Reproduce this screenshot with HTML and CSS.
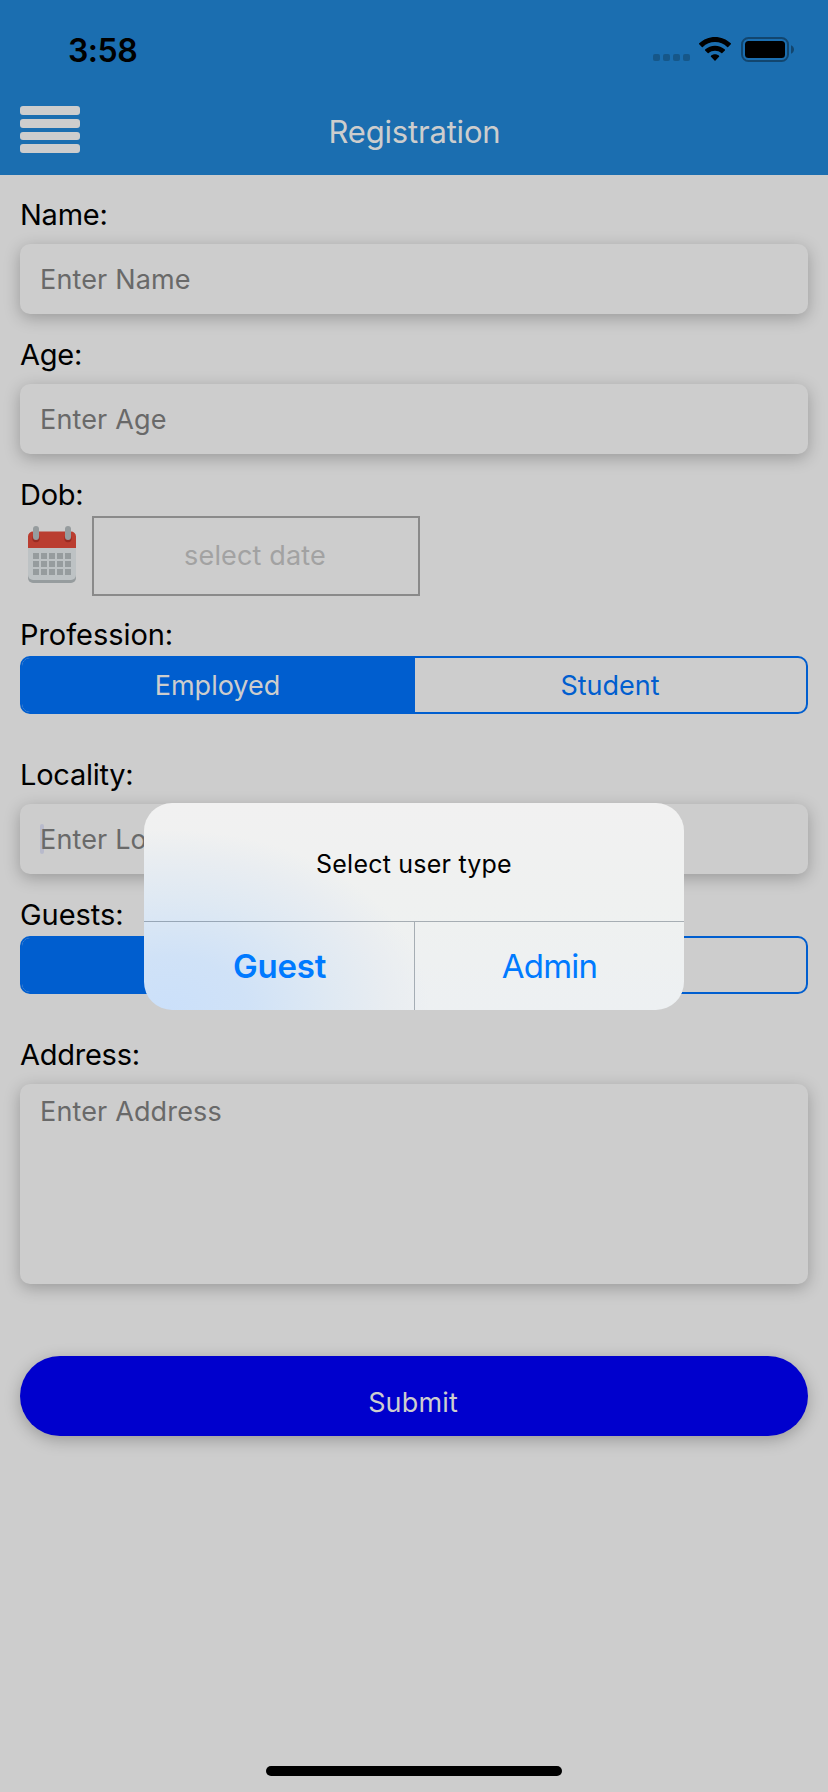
FILE: index.html
```html
<!DOCTYPE html>
<html lang="en">
<head>
<meta charset="utf-8">
<title>Registration</title>
<link rel="stylesheet" href="styles.css">
</head>
<body>
<div class="screen">
  <header class="header">
    <div class="status-bar">
      <span class="time">3:58</span>
      <div class="status-icons">
        <svg class="cellular" width="37" height="7" viewBox="0 0 37 7"><g fill="#165789"><rect width="7" height="7" rx="2"/><rect x="10" width="7" height="7" rx="2"/><rect x="20" width="7" height="7" rx="2"/><rect x="30" width="7" height="7" rx="2"/></g></svg>
        <svg class="wifi" width="32" height="24" viewBox="0 0 32 24"><path d="M16 0C10 0 4.400 2.300.2 6.300q-.5.500 0 1l2.600 2.600q.5.500 1 0C7.100 6.800 11.400 5.100 16 5.100s8.900 1.700 12.200 4.800q.5.500 1 0l2.600-2.600q.5-.5 0-1C27.600 2.300 22 0 16 0zM16 8.700c-3.700 0-7.200 1.400-9.900 3.800q-.5.500 0 1l2.600 2.600q.5.500 1 0c1.700-1.500 3.900-2.300 6.300-2.300s4.600.8 6.300 2.300q.5.500 1 0l2.600-2.600q.5-.5 0-1C23.200 10.100 19.700 8.700 16 8.700zM16 17.300c-1.500 0-2.900.5-4 1.500q-.5.500 0 1l3.500 3.600q.5.500 1 0l3.500-3.600q.5-.5 0-1c-1.100-1-2.500-1.500-4-1.500z"/></svg>
        <svg class="battery" width="53" height="25" viewBox="0 0 53 25"><rect x="1" y="1" width="46" height="23" rx="6.500" fill="none" stroke="#12466f" stroke-width="2"/><rect x="4" y="4" width="40" height="17" rx="3.500"/><path d="M50 8.200c4 1.700 4 6.900 0 8.600z" fill="#12466f"/></svg>
      </div>
    </div>
    <div class="nav-bar">
      <button class="menu" aria-label="Menu"><span></span><span></span><span></span><span></span></button>
      <h1 class="title">Registration</h1>
    </div>
  </header>

  <main class="form">
    <div class="field"><label class="label">Name:</label><div class="input"><span>Enter Name</span></div></div>
    <div class="field"><label class="label">Age:</label><div class="input"><span>Enter Age</span></div></div>
    <div class="field">
      <label class="label">Dob:</label>
      <div class="date-row">
        <svg class="calendar" width="48" height="57" viewBox="0 0 48 57">
          <path d="M0 18h48v34a5 5 0 0 1-5 5H5a5 5 0 0 1-5-5z" fill="#969c9e"/>
          <path d="M0 18h48v31a5 5 0 0 1-5 5H5a5 5 0 0 1-5-5z" fill="#bdc2c4"/>
          <path d="M5 5.500h38a5 5 0 0 1 5 5V22H0V10.500a5 5 0 0 1 5-5z" fill="#ba3d30"/>
          <circle cx="8" cy="12.500" r="3.700" fill="#982b22"/><circle cx="40" cy="12.500" r="3.700" fill="#982b22"/>
          <rect x="5" width="6" height="14" rx="3" fill="#969c9e"/><rect x="37" width="6" height="14" rx="3" fill="#969c9e"/>
          <path d="M5 27h6v6H5zm8 0h6v6h-6zm8 0h6v6h-6zm8 0h6v6h-6zm8 0h6v6h-6zM5 35h6v6H5zm8 0h6v6h-6zm8 0h6v6h-6zm8 0h6v6h-6zm8 0h6v6h-6zM5 43h6v6H5zm8 0h6v6h-6zm8 0h6v6h-6zm8 0h6v6h-6zm8 0h6v6h-6z" fill="#969c9e"/>
        </svg>
        <div class="date">select date</div>
      </div>
    </div>
    <div class="field">
      <label class="label wide">Profession:</label>
      <div class="segmented"><span class="segment selected">Employed</span><span class="segment">Student</span></div>
    </div>
    <div class="field"><label class="label">Locality:</label><div class="input focused"><span>Enter Locality</span></div></div>
    <div class="field">
      <label class="label wide">Guests:</label>
      <div class="segmented"><span class="segment selected"></span><span class="segment"></span></div>
    </div>
    <div class="field"><label class="label">Address:</label><div class="input textarea"><span>Enter Address</span></div></div>
    <button class="submit">Submit</button>
  </main>

  <div class="home-indicator"></div>

  <div class="dialog" role="dialog">
    <p class="dialog-title">Select user type</p>
    <div class="dialog-actions">
      <button class="action bold">Guest</button>
      <button class="action">Admin</button>
    </div>
  </div>
</div>
</body>
</html>
```
FILE: styles.css
```css
* { box-sizing: border-box; }
body { margin: 0; background: #cdcdcd; font-family: Inter, "Liberation Sans", sans-serif; color: #000; }
button { border: 0; padding: 0; background: none; font: inherit; }
.screen { position: relative; width: 828px; height: 1792px; display: flex; flex-direction: column; overflow: hidden; background: #cdcdcd; }

.header { height: 175px; flex: none; background: #1b6eb0; }
.status-bar { height: 88px; display: flex; justify-content: space-between; padding: 0 34px 0 68px; }
.time { margin-top: 31px; font-size: 32px; line-height: 39px; font-weight: 600; letter-spacing: -.5px; }
.status-icons { display: flex; align-items: flex-start; padding-top: 37px; }
.cellular { margin: 17px 9px 0 0; }
.wifi { margin-right: 10px; }
.nav-bar { height: 87px; display: grid; grid-template-columns: 60px 1fr 60px; padding: 0 20px; }
.menu { display: flex; flex-direction: column; gap: 4px; padding-top: 18px; }
.menu span { display: block; width: 60px; height: 8.8px; border-radius: 3px; background: #cdcdcd; }
.title { margin: 24px 0 0; padding-left: 1px; text-align: center; font-size: 31px; line-height: 40px; font-weight: 400; letter-spacing: -.2px; color: #cdcdcd; }

.form { display: flex; flex-direction: column; padding: 15px 20px 0; }
.field { height: 140px; display: flex; flex-direction: column; }
.field:nth-child(7) { height: 326px; }
.label { height: 46px; flex: none; padding-top: 3px; line-height: 43px; font-size: 29px; letter-spacing: -.25px; }
.label.wide { letter-spacing: -.05px; }
.input { height: 70px; flex: none; margin-top: 8px; padding: 0 20px; border-radius: 10px; background: #cdcdcd; box-shadow: 0 4px 16px rgba(0, 0, 0, .25); font-size: 27px; line-height: 72px; letter-spacing: .15px; color: #696969; }
.focused::before { content: ""; float: left; width: 4px; height: 30px; margin: 20px -4px 0 0; border-radius: 2px; background: #b8bacb; }
.focused span { position: relative; }
.textarea { height: 200px; line-height: 56px; }
.date-row { display: flex; }
.calendar { margin: 10px 16px 0 8px; }
.date { width: 328px; height: 80px; padding-right: 2px; border: 2px solid #8a8a8a; text-align: center; font-size: 27px; line-height: 76px; letter-spacing: .15px; color: #a2a2a2; }
.segmented { height: 58px; display: grid; grid-template-columns: 1fr 1fr; overflow: hidden; border: 2px solid #005ecf; border-radius: 10px; font-size: 27px; line-height: 56px; text-align: center; color: #005ecf; }
.selected { background: #005ecf; padding-right: 2px; color: #cdcdcd; }
.segment:first-child { margin-right: -1px; }
.submit { height: 80px; padding-right: 2px; border-radius: 40px; background: #0000cd; box-shadow: 0 4px 16px rgba(0, 0, 0, .25); font-size: 27px; line-height: 94px; letter-spacing: .15px; color: #cdcdcd; }
.home-indicator { width: 296px; height: 10px; margin: auto auto 16px; border-radius: 5px; background: #000; }

.dialog { position: absolute; left: 144px; top: 803px; width: 540px; height: 207px; display: flex; flex-direction: column; border-radius: 28px; overflow: hidden; background: radial-gradient(ellipse 260px 180px at 25px 207px, #cbe0fa 0, #d0e2f7 30%, #dfe9f3 62%, #e9edf1 85%, rgba(238, 240, 241, 0) 100%), linear-gradient(#f1f1f1, #eff1f0 50%, #edf0f2); }
.dialog-title { height: 118px; margin: 0; text-align: center; font-size: 25px; line-height: 122px; letter-spacing: .22px; }
.dialog-actions { flex: 1; display: grid; grid-template-columns: 270px 1fr; border-top: 1px solid rgba(0, 20, 40, .3); }
.action { font-size: 33px; line-height: 88px; letter-spacing: -.8px; color: #007aff; text-align: center; }
.action.bold { padding-left: 1px; font-weight: 600; letter-spacing: -.2px; }
.action + .action { border-left: 1px solid rgba(0, 20, 40, .3); }
```
